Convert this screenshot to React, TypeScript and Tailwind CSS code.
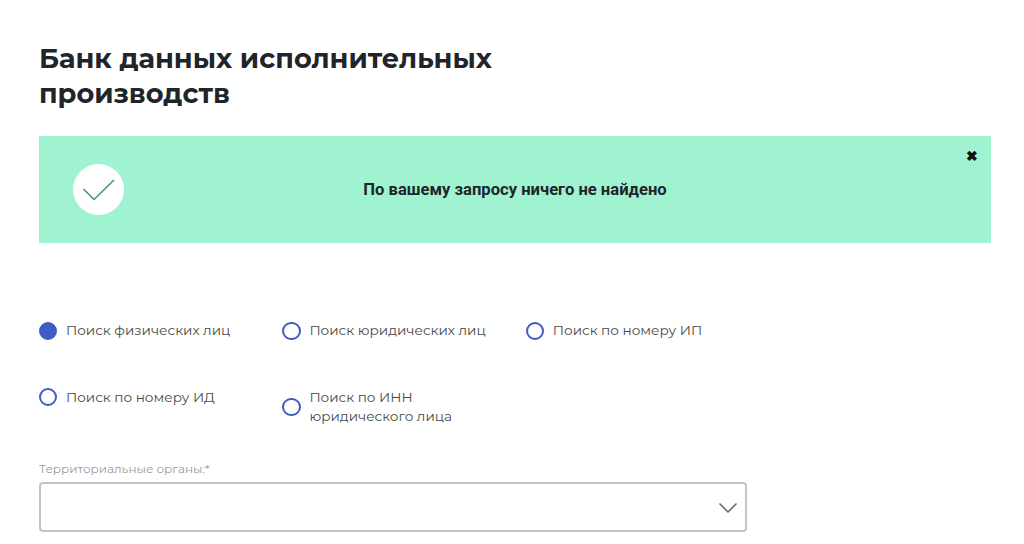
import type { ReactNode } from "react"
import { ChevronDown } from "lucide-react"

const row1 = ["Поиск физических лиц", "Поиск юридических лиц", "Поиск по номеру ИП"]

function Radio({ label, checked, className }: { label: ReactNode; checked?: boolean; className?: string }) {
  return (
    <label className={"flex items-center gap-[8.6px] " + (className ?? "")}>
      <span
        className={
          "w-[18.4px] h-[18.4px] rounded-full border-2 border-[#3f5bc4] shrink-0 " +
          (checked ? "bg-[#3f5bc4]" : "bg-white")
        }
      ></span>
      <span className="text-[13.6px] leading-[19.5px] text-[#4a4a4a]">{label}</span>
    </label>
  )
}

export default function App() {
  return (
    <div className="w-[1024px] h-[544px] overflow-hidden bg-white px-[39px] pt-[42px] font-['Montserrat','Inter','Liberation_Sans',sans-serif]">
      <h1 className="text-[27.2px] leading-[35px] font-bold text-[#212529] w-[500px] -mt-[1px]">
        Банк данных исполнительных производств
      </h1>

      {/* Alert */}
      <div className="relative mt-[25px] h-[107px] w-[952px] bg-[#9ff3d1] flex items-center pl-[34px]">
        <div className="w-[51px] h-[51px] rounded-full bg-white flex items-center justify-center">
          <svg width="34" height="24" viewBox="0 0 34 24" fill="none">
            <path d="M1.5 11l10.5 10.5L32 2" stroke="#3f9a68" strokeWidth="1.6" />
          </svg>
        </div>
        <div className="flex-1 text-center pr-[85px] mt-[1px] text-[16.6px] font-bold text-[#212529] font-['Roboto',sans-serif]">
          По вашему запросу ничего не найдено
        </div>
        <span className="absolute right-[13px] top-[11px] text-[14px] font-black leading-[18px] text-[#111]">✖</span>
      </div>

      {/* Search type */}
      <div className="mt-[78px] flex">
        {row1.map((t, i) => (
          <Radio key={t} label={t} checked={i === 0} className="w-[243.4px]" />
        ))}
      </div>
      <div className="mt-[47px] flex items-start">
        <Radio label="Поиск по номеру ИД" className="w-[243.4px]" />
        <Radio
          label={
            <>
              Поиск по ИНН
              <br />
              юридического лица
            </>
          }
        />
      </div>

      {/* Territorial select */}
      <div className="mt-[34px] text-[12px] leading-[16px] text-[#9a9a9a]">Территориальные органы:*</div>
      <div className="mt-[5px] w-[708px] h-[50px] rounded-[4px] border-2 border-[#c4c4c4] flex items-center justify-end pr-[1px]">
        <ChevronDown size={32} strokeWidth={1.3} className="text-[#707070] mt-[2px]" />
      </div>
    </div>
  )
}
